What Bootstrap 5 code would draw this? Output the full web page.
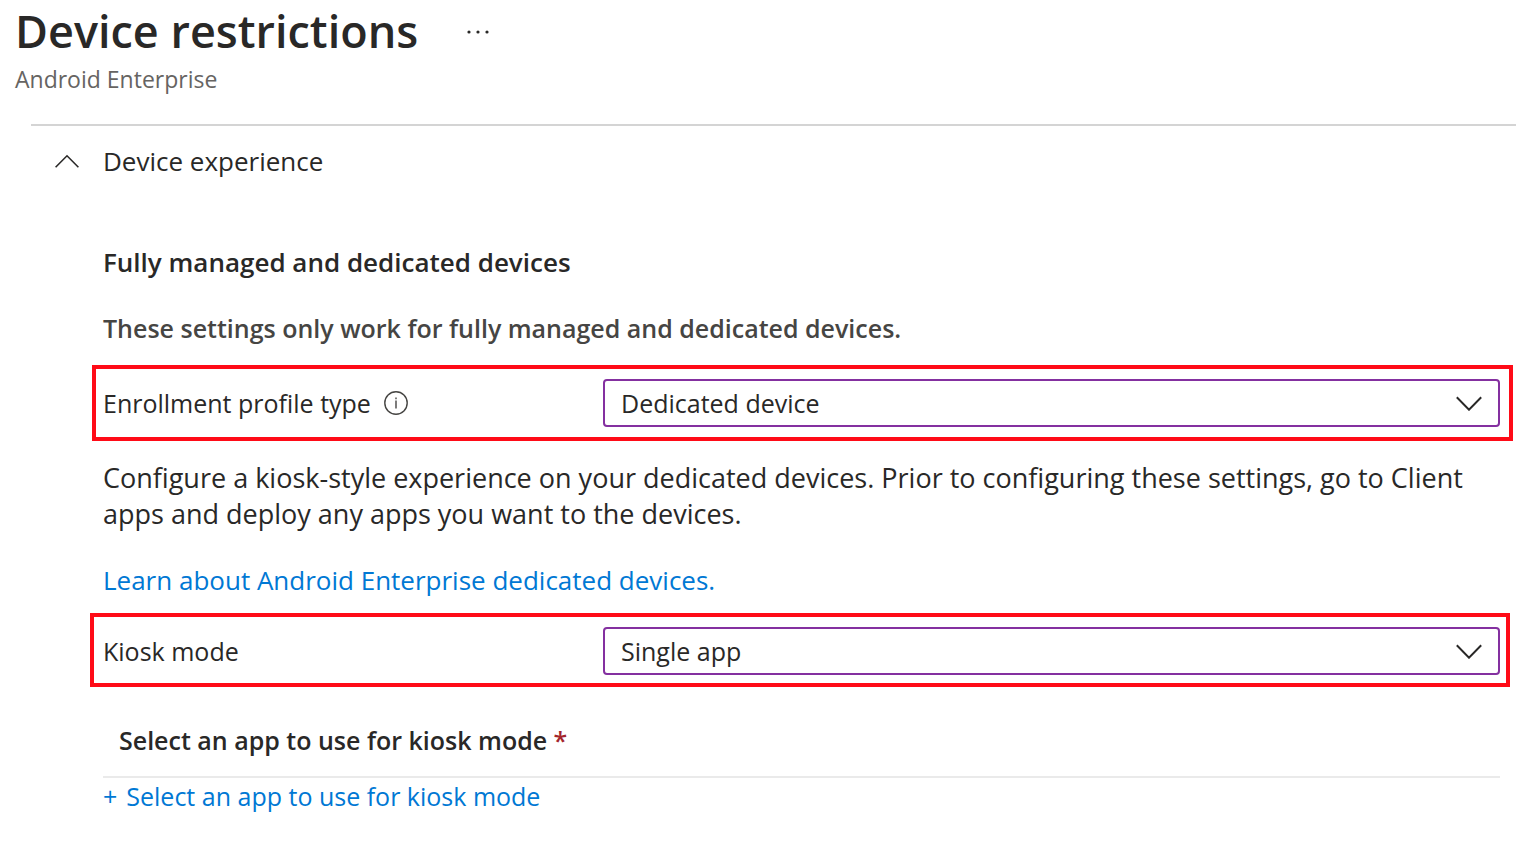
<!DOCTYPE html>
<html lang="en">
<head>
<meta charset="utf-8">
<meta name="viewport" content="width=device-width, initial-scale=1">
<title>Device restrictions</title>
<link href="https://cdn.jsdelivr.net/npm/bootstrap@5.3.0/dist/css/bootstrap.min.css" rel="stylesheet">
<style>
body { font-family: "Open Sans", "Noto Sans", sans-serif; font-size: 25px; line-height: 36px; color: #292827; background: #fff; }
.page-header { padding-left: 15px; }
.page-title { font-size: 45px; line-height: 62px; font-weight: 600; }
.page-subtitle { font-size: 23px; line-height: 32px; color: #666462; margin-top: 1px; }
.more-btn { margin: 2px 0 0 38px; }
.blade-body { padding-left: 31px; padding-right: 8px; margin-top: 29px; }
.section-toggle { border-top: 2px solid #d4d4d4; padding: 17px 0 0 24px; }
.section-toggle button { font-size: 26px; line-height: 36px; gap: 24px; color: inherit; }
.settings { padding: 65px 16px 0 72px; }
.settings h2 { font-size: 26px; line-height: 36px; font-weight: 600; }
.settings h3 { font-size: 25px; line-height: 36px; font-weight: 600; color: #464543; margin-top: 30px; }
.setting-row { border: 4px solid #ff0b17; }
.setting-row .setting-name { flex: 0 0 500px; gap: 13px; }
.profile-row { margin: 19px -13px 0 -11px; padding: 10px 9px 10px 7px; }
.kiosk-row { margin: 15px -10px 0 -13px; padding: 10px 6px 8px 9px; }
.setting-row .form-select {
  height: 48px; padding: 0 56px 0 16px; font-size: 25px; line-height: 36px; color: #292827;
  border: 2px solid #8430a0; border-radius: 4px; background-color: #fff;
  background-image: url("data:image/svg+xml,%3Csvg xmlns='http://www.w3.org/2000/svg' viewBox='0 0 26 16'%3E%3Cpath d='M.8 2.3 13 14.7 25.2 2.3' fill='none' stroke='%23292827' stroke-width='2'/%3E%3C/svg%3E");
  background-size: 26px 16px; background-position: right 16px center;
}
.copy { font-size: 27px; line-height: 36px; margin: 19px 0 0; }
.learn-more { font-size: 26px; line-height: 36px; margin: 30px 0 0; }
.azure-link { color: #0078d4; text-decoration: none; }
.app-heading { font-weight: 600; padding: 0 16px 18px; margin-top: 35px; border-bottom: 2px solid #eaeaea; }
.app-heading .required { color: #a4262c; }
.add-link { gap: 9px; }
</style>
</head>
<body>
<header class="page-header">
  <div class="d-flex align-items-center">
    <h1 class="page-title mb-0">Device restrictions</h1>
    <button type="button" class="more-btn btn p-2 border-0" aria-label="More options">
      <svg class="d-block" width="28" height="8" viewBox="0 0 28 8" fill="#292827"><circle cx="5" cy="4" r="1.6"/><circle cx="14" cy="4" r="1.6"/><circle cx="23" cy="4" r="1.6"/></svg>
    </button>
  </div>
  <p class="page-subtitle mb-0">Android Enterprise</p>
</header>
<main class="blade-body">
  <div class="section-toggle">
    <button type="button" class="btn p-0 border-0 d-flex align-items-center" aria-expanded="true" aria-controls="experience">
      <svg width="24" height="14" viewBox="0 0 24 14" fill="none" stroke="#292827" stroke-width="1.6"><path d="M.6 13.2 12 1.8l11.4 11.4"/></svg>
      <span>Device experience</span>
    </button>
  </div>
  <section id="experience" class="settings">
    <h2 class="mb-0">Fully managed and dedicated devices</h2>
    <h3 class="mb-0">These settings only work for fully managed and dedicated devices.</h3>
    <div class="setting-row profile-row d-flex align-items-center">
      <div class="setting-name d-flex align-items-center">
        <label for="profile">Enrollment profile type</label>
        <svg width="24" height="24" viewBox="0 0 24 24" fill="none" stroke="#464543" stroke-width="1.4"><circle cx="12" cy="12" r="11.2"/><path d="M12 9.6v8M12 6.4v1.8"/></svg>
      </div>
      <select id="profile" class="form-select"><option>Dedicated device</option></select>
    </div>
    <p class="copy">Configure a kiosk-style experience on your dedicated devices. Prior to configuring these settings, go to Client apps and deploy any apps you want to the devices.</p>
    <p class="learn-more"><a class="azure-link" href="#">Learn about Android Enterprise dedicated devices.</a></p>
    <div class="setting-row kiosk-row d-flex align-items-center">
      <div class="setting-name"><label for="kiosk">Kiosk mode</label></div>
      <select id="kiosk" class="form-select"><option>Single app</option></select>
    </div>
    <div class="app-heading">Select an app to use for kiosk mode <span class="required">*</span></div>
    <a class="azure-link add-link d-inline-flex align-items-center" href="#">
      <span>+</span><span>Select an app to use for kiosk mode</span>
    </a>
  </section>
</main>
<script src="https://cdn.jsdelivr.net/npm/bootstrap@5.3.0/dist/js/bootstrap.bundle.min.js"></script>
</body>
</html>
